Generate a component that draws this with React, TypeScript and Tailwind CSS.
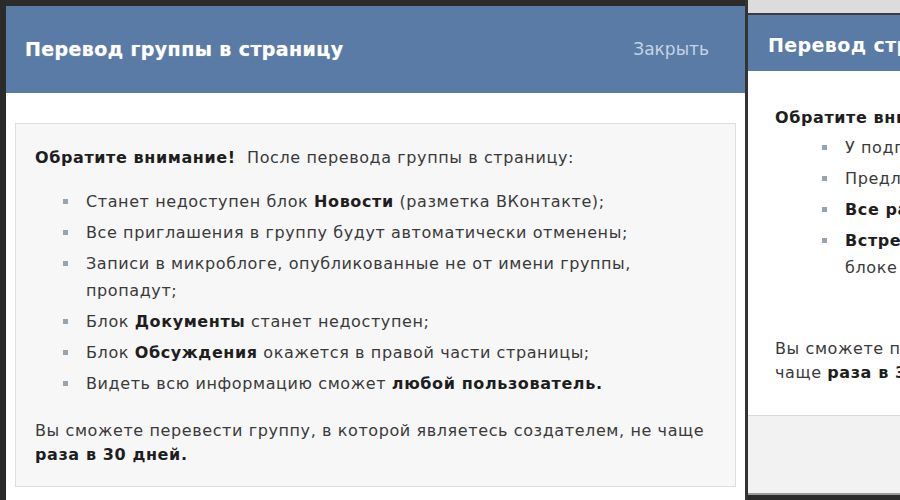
import type { ReactNode } from "react";

const font = { fontFamily: '"DejaVu Sans", Verdana, sans-serif' };

function Bullet({ children, className }: { children: ReactNode; className?: string }) {
  return (
    <li className={`flex ${className ?? ""}`}>
      <span className="mt-[11px] mr-[18px] h-[5px] w-[5px] shrink-0 bg-[#98a3b0]" />
      <span className="leading-[27px]">{children}</span>
    </li>
  );
}

function LeftDialog() {
  return (
    <div className="flex h-full w-[739px] shrink-0 flex-col bg-white">
      <div className="flex h-[87px] items-center justify-between bg-[#5a7ba6] pl-[19px] pr-[36px]">
        <h2 className="text-[19px] font-bold tracking-[0.4px] text-white [text-shadow:0_0_1px_rgba(255,255,255,0.6)]">
          Перевод группы в страницу
        </h2>
        <span className="text-[17px] text-[#c4d3e6]">Закрыть</span>
      </div>
      <div className="px-[9px] pt-[30px]">
        <div className="h-[364px] border border-[#dedede] bg-[#f7f7f7] pl-[19px] pr-[10px] pt-[22px] text-[16px] tracking-[0.6px] text-[#3a3a3a]">
          <p className="leading-[24px]">
            <b className="text-[#1e1e1e]">Обратите внимание!</b>&nbsp;&nbsp;После перевода группы в страницу:
          </p>
          <ul className="mt-[18px] flex flex-col gap-[4px] pl-[28px]">
            <Bullet>
              Станет недоступен блок <b className="text-[#1e1e1e]">Новости</b> (разметка ВКонтакте);
            </Bullet>
            <Bullet>Все приглашения в группу будут автоматически отменены;</Bullet>
            <Bullet>
              Записи в микроблоге, опубликованные не от имени группы,
              <br />
              пропадут;
            </Bullet>
            <Bullet>
              Блок <b className="text-[#1e1e1e]">Документы</b> станет недоступен;
            </Bullet>
            <Bullet>
              Блок <b className="text-[#1e1e1e]">Обсуждения</b> окажется в правой части страницы;
            </Bullet>
            <Bullet>
              Видеть всю информацию сможет <b className="text-[#1e1e1e]">любой пользователь.</b>
            </Bullet>
          </ul>
          <p className="mt-[22px] whitespace-nowrap leading-[24px]">
            Вы сможете перевести группу, в которой являетесь создателем, не чаще
            <br />
            <b className="text-[#1e1e1e]">раза в 30 дней.</b>
          </p>
        </div>
      </div>
    </div>
  );
}

function RightDialog() {
  return (
    <div className="flex h-full min-w-0 flex-1 flex-col">
      <div className="h-[15px] shrink-0 border-b-2 border-[#3b3b3b] bg-[#dcdcdc]" />
      <div className="flex h-[478px] flex-col overflow-hidden whitespace-nowrap bg-white">
        <div className="flex h-[56px] shrink-0 items-center bg-[#5a7ba6] pl-[20px] pt-[5px]">
          <h2 className="text-[19px] font-bold tracking-[0.4px] text-white">Перевод страницы</h2>
        </div>
        <div className="flex-1 pl-[27px] pt-[35px] text-[16px] tracking-[0.6px] text-[#3a3a3a]">
          <p className="leading-[24px]">
            <b className="text-[#1e1e1e]">Обратите внимание!</b>
          </p>
          <ul className="mt-[4px] flex flex-col gap-[4px] pl-[47px]">
            <Bullet>У подписчиков</Bullet>
            <Bullet>Предложения</Bullet>
            <Bullet>
              <b className="text-[#1e1e1e]">Все ранее</b>
            </Bullet>
            <li className="flex">
              <span className="mt-[11px] mr-[18px] h-[5px] w-[5px] shrink-0 bg-[#98a3b0]" />
              <span className="leading-[27px]">
                <b className="text-[#1e1e1e]">Встречи</b>
                <br />
                блоке
              </span>
            </li>
          </ul>
          <p className="mt-[56px] leading-[24px]">
            Вы сможете перевести
            <br />
            чаще <b className="text-[#1e1e1e]">раза в 30 дней.</b>
          </p>
        </div>
        <div className="h-[78px] shrink-0 border-t border-[#dadada] bg-[#f2f2f2]" />
      </div>
      <div className="flex-1 border-t-2 border-[#9a9a9a] bg-[#2b2b2b]" />
    </div>
  );
}

export default function App() {
  return (
    <div style={font} className="flex h-[500px] w-[900px] overflow-hidden bg-[#2b2b2b] pl-[6px] pt-[6px]">
      <div className="h-[494px] shrink-0">
        <LeftDialog />
      </div>
      <div className="-mt-[6px] flex h-[500px] min-w-0 flex-1 border-l-[3px] border-[#333]">
        <RightDialog />
      </div>
    </div>
  );
}
